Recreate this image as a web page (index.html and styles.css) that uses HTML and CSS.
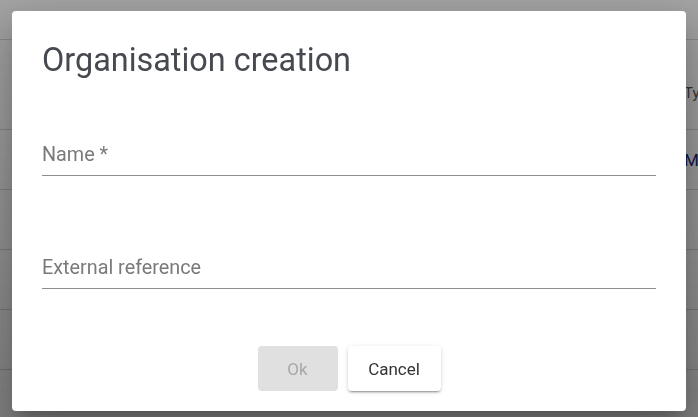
FILE: index.html
```html
<!DOCTYPE html>
<html>
<head>
<meta charset="utf-8">
<link rel="stylesheet" href="styles.css">
</head>
<body>
<div class="page">
  <div class="topbar"></div>
  <div class="row head"><span class="cell">Type</span></div>
  <div class="row"><span class="cell link">Mode</span></div>
  <div class="row"></div>
  <div class="row"></div>
  <div class="row"></div>
  <div class="row"></div>
</div>
<div class="overlay">
  <div class="dialog">
    <h1 class="title">Organisation creation</h1>
    <div class="fields">
      <div class="field"><span class="label">Name *</span></div>
      <div class="field"><span class="label">External reference</span></div>
    </div>
    <div class="actions">
      <button class="btn btn-ok" disabled>Ok</button>
      <button class="btn btn-cancel">Cancel</button>
    </div>
  </div>
</div>
</body>
</html>
```

FILE: styles.css
```css
html, body {
  margin: 0;
  padding: 0;
  width: 698px;
  height: 417px;
  overflow: hidden;
  font-family: Roboto, "Liberation Sans", sans-serif;
}
.page {
  background: #fff;
  height: 417px;
}
.topbar {
  height: 40px;
  border-bottom: 1px solid #d8d8d8;
  box-sizing: border-box;
}
.row {
  height: 60px;
  border-bottom: 1px solid #d8d8d8;
  box-sizing: border-box;
  display: flex;
  align-items: center;
  padding-left: 684px;
  font-size: 15px;
  color: #555;
  white-space: nowrap;
}
.row.head {
  height: 90px;
  padding-top: 16px;
}
.link {
  color: #1a237e;
  font-size: 17px;
}
.overlay {
  position: fixed;
  inset: 0;
  background: linear-gradient(to bottom, rgba(0,0,0,0.36), rgba(0,0,0,0.5));
  display: flex;
  align-items: flex-start;
  justify-content: center;
}
.dialog {
  margin-top: 11px;
  width: 674px;
  height: 400px;
  box-sizing: border-box;
  background: #fff;
  border-radius: 4px;
  box-shadow: 0 11px 15px -7px rgba(0,0,0,.2), 0 24px 38px 3px rgba(0,0,0,.14), 0 9px 46px 8px rgba(0,0,0,.12);
  padding: 29px 30px 20px;
  display: flex;
  flex-direction: column;
}
.title {
  margin: 0;
  font-weight: 400;
  font-size: 32.4px;
  line-height: 40px;
  color: #46494f;
}
.fields {
  display: flex;
  flex-direction: column;
  gap: 79px;
  margin-top: 62px;
}
.field {
  height: 34px;
  border-bottom: 1px solid #8e8e8e;
  box-sizing: border-box;
  display: flex;
  align-items: flex-start;
}
.label {
  font-size: 19.8px;
  line-height: 24px;
  color: #7a7a7a;
  margin-top: 1px;
}
.actions {
  margin-top: auto;
  display: flex;
  justify-content: center;
  gap: 10px;
}
.btn {
  height: 45px;
  border: none;
  border-radius: 4px;
  font-family: Roboto, "Liberation Sans", sans-serif;
  font-size: 17px;
  padding: 0;
}
.btn-ok {
  width: 80px;
  background: #e0e0e0;
  color: #a8a8a8;
}
.btn-cancel {
  width: 93px;
  background: #fff;
  color: #333;
  box-shadow: 0 3px 1px -2px rgba(0,0,0,.2), 0 2px 2px 0 rgba(0,0,0,.14), 0 1px 5px 0 rgba(0,0,0,.12);
}
```
